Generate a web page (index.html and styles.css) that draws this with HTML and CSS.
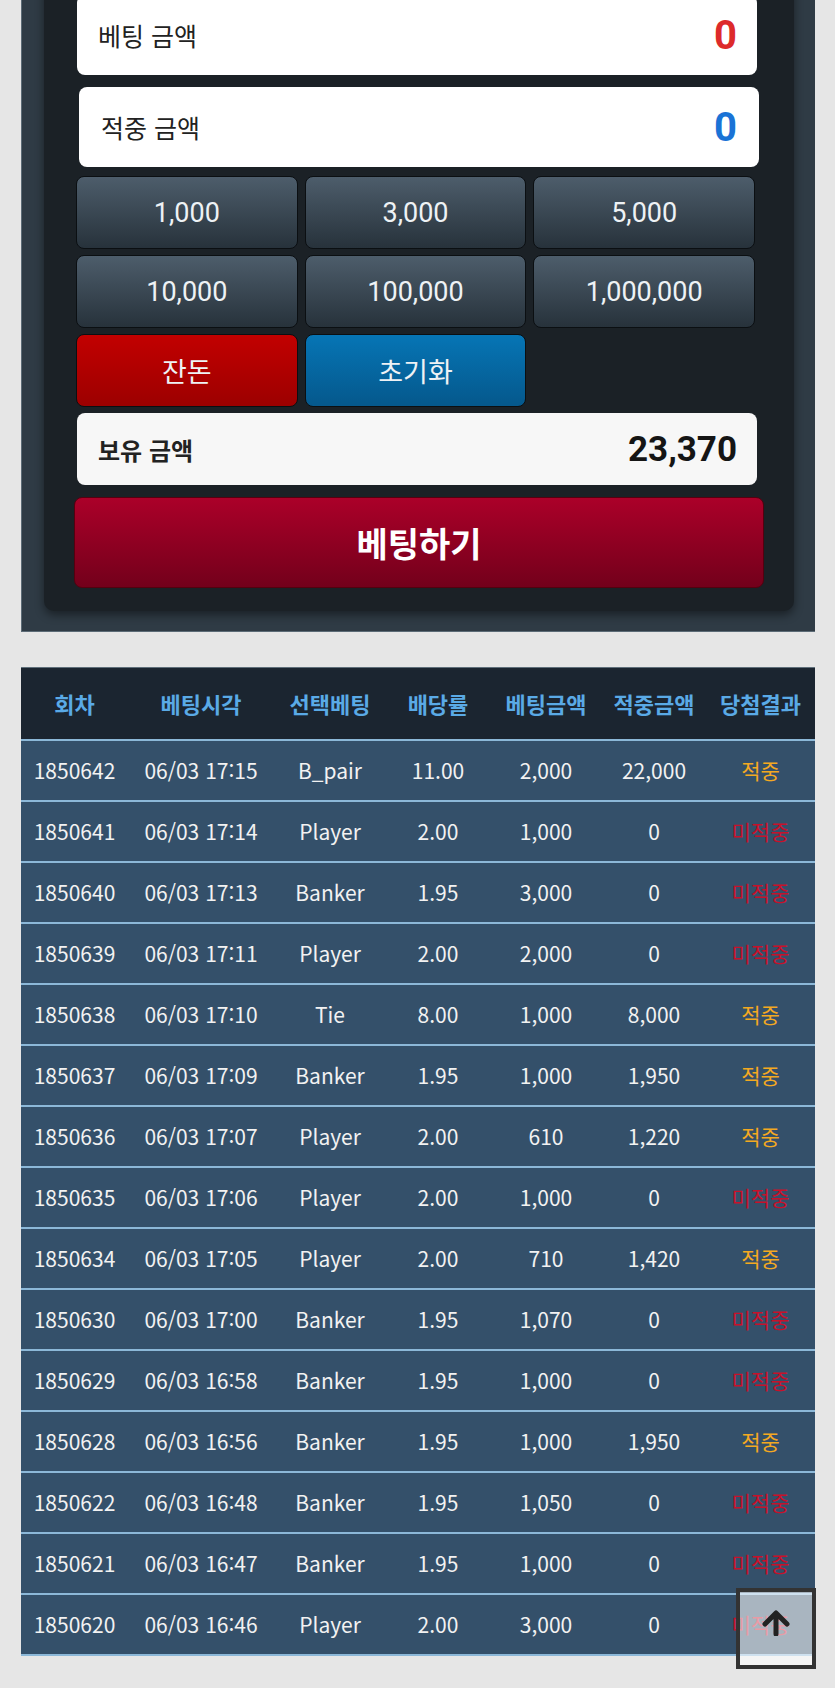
FILE: index.html
```html
<!DOCTYPE html>
<html lang="ko">
  <head>
    <meta charset="UTF-8" />
    <meta name="viewport" content="width=device-width, initial-scale=1.0" />
    <title>베팅</title>
    <link rel="stylesheet" href="styles.css">
  </head>

  <body>
    <div class="page">
      <!-- Betting panel -->
      <div class="betPanel">
        <div class="betInner">
          <div class="amountBox">
            <span class="label">베팅 금액</span>
            <span class="value red">0</span>
          </div>
          <div class="amountBox second">
            <span class="label">적중 금액</span>
            <span class="value blue">0</span>
          </div>

          <div class="chipGrid">
            <button class="chip">1,000</button>
            <button class="chip">3,000</button>
            <button class="chip">5,000</button>
            <button class="chip">10,000</button>
            <button class="chip">100,000</button>
            <button class="chip">1,000,000</button>
            <button class="chip change">잔돈</button>
            <button class="chip reset">초기화</button>
          </div>

          <div class="holdBox">
            <span class="label">보유 금액</span>
            <span class="value">23,370</span>
          </div>

          <button class="betBtn">베팅하기</button>
        </div>
      </div>

      <!-- Bet history -->
      <table class="history">
        <colgroup>
          <col style="width: 107px" />
          <col style="width: 146px" />
          <col style="width: 112px" />
          <col style="width: 104px" />
          <col style="width: 112px" />
          <col style="width: 104px" />
          <col style="width: 109px" />
        </colgroup>
        <thead>
          <tr>
            <th>회차</th>
            <th>베팅시각</th>
            <th>선택베팅</th>
            <th>배당률</th>
            <th>베팅금액</th>
            <th>적중금액</th>
            <th>당첨결과</th>
          </tr>
        </thead>
        <tbody>
          <tr><td>1850642</td><td>06/03 17:15</td><td>B_pair</td><td>11.00</td><td>2,000</td><td>22,000</td><td class="win">적중</td></tr>
          <tr><td>1850641</td><td>06/03 17:14</td><td>Player</td><td>2.00</td><td>1,000</td><td>0</td><td class="lose">미적중</td></tr>
          <tr><td>1850640</td><td>06/03 17:13</td><td>Banker</td><td>1.95</td><td>3,000</td><td>0</td><td class="lose">미적중</td></tr>
          <tr><td>1850639</td><td>06/03 17:11</td><td>Player</td><td>2.00</td><td>2,000</td><td>0</td><td class="lose">미적중</td></tr>
          <tr><td>1850638</td><td>06/03 17:10</td><td>Tie</td><td>8.00</td><td>1,000</td><td>8,000</td><td class="win">적중</td></tr>
          <tr><td>1850637</td><td>06/03 17:09</td><td>Banker</td><td>1.95</td><td>1,000</td><td>1,950</td><td class="win">적중</td></tr>
          <tr><td>1850636</td><td>06/03 17:07</td><td>Player</td><td>2.00</td><td>610</td><td>1,220</td><td class="win">적중</td></tr>
          <tr><td>1850635</td><td>06/03 17:06</td><td>Player</td><td>2.00</td><td>1,000</td><td>0</td><td class="lose">미적중</td></tr>
          <tr><td>1850634</td><td>06/03 17:05</td><td>Player</td><td>2.00</td><td>710</td><td>1,420</td><td class="win">적중</td></tr>
          <tr><td>1850630</td><td>06/03 17:00</td><td>Banker</td><td>1.95</td><td>1,070</td><td>0</td><td class="lose">미적중</td></tr>
          <tr><td>1850629</td><td>06/03 16:58</td><td>Banker</td><td>1.95</td><td>1,000</td><td>0</td><td class="lose">미적중</td></tr>
          <tr><td>1850628</td><td>06/03 16:56</td><td>Banker</td><td>1.95</td><td>1,000</td><td>1,950</td><td class="win">적중</td></tr>
          <tr><td>1850622</td><td>06/03 16:48</td><td>Banker</td><td>1.95</td><td>1,050</td><td>0</td><td class="lose">미적중</td></tr>
          <tr><td>1850621</td><td>06/03 16:47</td><td>Banker</td><td>1.95</td><td>1,000</td><td>0</td><td class="lose">미적중</td></tr>
          <tr><td>1850620</td><td>06/03 16:46</td><td>Player</td><td>2.00</td><td>3,000</td><td>0</td><td class="lose">미적중</td></tr>
        </tbody>
      </table>
    </div>

    <!-- Back to top -->
    <a class="toTop" href="#">
      <svg width="28" height="26" viewBox="0 0 28 26">
        <path d="M14 24V4M3 14L14 3l11 11" fill="none" stroke="#222" stroke-width="5" stroke-linecap="round" stroke-linejoin="round" />
      </svg>
    </a>
  </body>
</html>
```

FILE: styles.css
```css
* {
  margin: 0;
  padding: 0;
  box-sizing: border-box;
}

body {
  background-color: #e6e6e6;
  font-family: Roboto, "Noto Sans CJK KR", sans-serif;
}

.page {
  margin-top: -40px;
}

/* outer slate frame */
.betPanel {
  margin-left: 21px;
  width: 794px;
  padding: 20px 21px 20px 22px;
  background-color: #2f3b45;
  border-left: 1px solid #5c6b76;
  border-bottom: 1px solid #5c6b76;
}

.betInner {
  padding: 15px 30px 23px 30px;
  background-color: #1b2126;
  border-radius: 10px;
  box-shadow: 0 4px 10px rgba(0, 0, 0, 0.45);
}

.amountBox,
.holdBox {
  display: flex;
  justify-content: space-between;
  align-items: center;
  height: 80px;
  margin: 0 7px 0 3px;
  padding: 0 20px 0 21px;
  background-color: #fff;
  border-radius: 8px;
}

.amountBox.second {
  margin: 12px 5px 0 5px;
  padding: 0 22px 0 22px;
}

.amountBox .label {
  font-family: "Noto Sans CJK KR", sans-serif;
  font-size: 25px;
  color: #222;
}

.amountBox .value {
  font-size: 40px;
  font-weight: 700;
}

.red {
  color: #dd2a2a;
}

.blue {
  color: #1a73d6;
}

.chipGrid {
  display: grid;
  grid-template-columns: repeat(3, 1fr);
  grid-auto-rows: 73px;
  gap: 6px 7px;
  margin: 9px 9px 0 2px;
}

.chip {
  font-family: Roboto, "Noto Sans CJK KR", sans-serif;
  font-size: 27px;
  color: #eef2f5;
  background: linear-gradient(#4d5d6b, #27323b);
  border: 1px solid #0b0f12;
  border-radius: 8px;
}

.chip.change {
  background: linear-gradient(#c20000, #9c0000);
}

.chip.reset {
  background: linear-gradient(#0675b5, #05588c);
}

.holdBox {
  height: 72px;
  margin-top: 6px;
  background-color: #f7f7f7;
}

.holdBox .label {
  font-family: "Noto Sans CJK KR", sans-serif;
  font-size: 24px;
  font-weight: 700;
  color: #222;
}

.holdBox .value {
  font-size: 35px;
  font-weight: 700;
  color: #151515;
}

.betBtn {
  display: block;
  width: 100%;
  height: 91px;
  margin-top: 12px;
  font-family: "Noto Sans CJK KR", sans-serif;
  font-size: 34px;
  font-weight: 700;
  color: #fff;
  background: linear-gradient(#ab0029, #73001b);
  border: 1px solid #55000f;
  border-radius: 8px;
}

/* history table */
.history {
  margin: 35px 0 0 21px;
  width: 794px;
  table-layout: fixed;
  border-collapse: collapse;
  font-family: "Noto Sans CJK KR", sans-serif;
  text-align: center;
}

.history th {
  height: 72px;
  font-size: 22px;
  font-weight: 700;
  color: #5aaae6;
  background-color: #1b2530;
  border-top: 1px solid #5f6f7a;
}

.history td {
  height: 61px;
  font-size: 21px;
  color: #f2f2f2;
  background-color: #34506a;
  border-top: 2px solid #8cb8d8;
}

.history tr:last-child td {
  border-bottom: 2px solid #8cb8d8;
}

.history td.win {
  color: #f4a921;
}

.history td.lose {
  color: #c8102a;
}

.toTop {
  position: fixed;
  right: 19px;
  bottom: 19px;
  width: 80px;
  height: 81px;
  display: flex;
  justify-content: center;
  align-items: center;
  padding-bottom: 12px;
  background-color: rgba(255, 255, 255, 0.58);
  border: 4px solid #333;
}
```
